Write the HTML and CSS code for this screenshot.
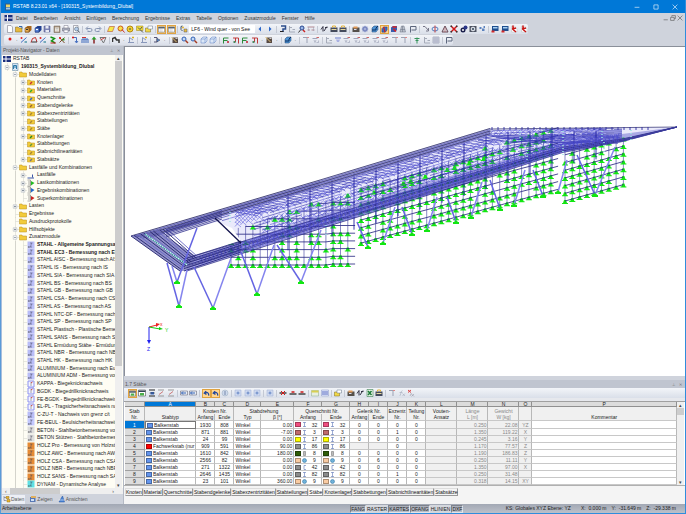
FILE: index.html
```html
<!DOCTYPE html>
<html lang="de">
<head>
    <meta charset="UTF-8">
    <meta name="viewport" content="width=device-width, initial-scale=1.0">
    <title>RSTAB 8.23.01 x64 - [190315_Systembildung_Dlubal]</title>
    <link rel="stylesheet" href="styles.css">
</head>
<body>
    <div class="app">
        <header class="titlebar">
            <svg class="icon" viewBox="0 0 16 16"><path d="M2 1h10v14H2z" fill="#2d5d8c"/><path d="M4 3h8v5H4z" fill="#e9d36a"/><path d="M4 9h8v4H4z" fill="#9fc7e8"/></svg>
            <h1>RSTAB 8.23.01 x64 - [190315_Systembildung_Dlubal]</h1>
            <div class="window-buttons">
                <button aria-label="Minimieren"><svg viewBox="0 0 10 10"><path d="M1 5.500h8"/></svg></button>
                <button aria-label="Maximieren"><svg viewBox="0 0 10 10"><path d="M1.500 1.500h7v7h-7z"/></svg></button>
                <button aria-label="Schließen"><svg viewBox="0 0 10 10"><path d="M1 1l8 8M9 1l-8 8"/></svg></button>
            </div>
        </header>

        <nav class="menubar">
            <svg class="flag" viewBox="0 0 16 12"><path d="M0 0h16v12H0z" fill="#1c2f7c"/><path d="M0 6h16M6 0v12" stroke="#fff" stroke-width="2"/></svg>
            <button>Datei</button>
            <button>Bearbeiten</button>
            <button>Ansicht</button>
            <button>Einfügen</button>
            <button>Berechnung</button>
            <button>Ergebnisse</button>
            <button>Extras</button>
            <button>Tabelle</button>
            <button>Optionen</button>
            <button>Zusatzmodule</button>
            <button>Fenster</button>
            <button>Hilfe</button>
            <div class="mdi-buttons">
                <button aria-label="Fenster minimieren"><svg viewBox="0 0 10 10"><path d="M1 8h7"/></svg></button>
                <button aria-label="Fenster wiederherstellen"><svg viewBox="0 0 10 10"><path d="M3 3V1h6v5H7M1 4h6v5H1z"/></svg></button>
                <button aria-label="Fenster schließen"><svg viewBox="0 0 10 10"><path d="M1 1l8 8M9 1l-8 8"/></svg></button>
            </div>
        </nav>

        <div class="toolbars">
            <div class="toolbar toolbar-main" id="mainToolbar"></div>
            <div class="toolbar toolbar-model" id="modelToolbar"></div>
        </div>

        <main class="workspace">
            <aside class="navigator">
                <div class="panel-title"><h2>Projekt-Navigator - Daten</h2><span class="pin">⊥</span><span class="pin">✕</span></div>
                <div class="tree-area">
                    <ul class="tree" id="tree"></ul>
                    <div class="scroll-v"><span>▴</span><div class="thumb"></div><span>▾</span></div>
                </div>
                <div class="scroll-h"><span>‹</span><div class="thumb"></div><span>›</span></div>
                <div class="nav-tabs">
                    <button class="active"><svg class="icon" viewBox="0 0 16 16"><path d="M2 2v9h5M2 5h5" stroke="#557" fill="none"/><path d="M6 3h6v4H6zM8 9h6v5H8z" fill="#e9b62e" stroke="#946c14"/></svg>Daten</button>
                    <button><svg class="icon" viewBox="0 0 16 16"><path d="M2 4h11v10H2z" fill="#5878b4"/><path d="M4 2h10v4H4z" fill="#e0b060"/><path d="M4 8h6v4H4z" fill="#cfe0f4"/></svg>Zeigen</button>
                    <button><svg class="icon" viewBox="0 0 16 16"><path d="M2 14L9 2l4 12z" fill="#4c86d8" stroke="#1d4e9e"/><path d="M1 10h12" stroke="#fff"/></svg>Ansichten</button>
                </div>
            </aside>

            <div class="content">
                <section class="view">
                    <svg class="model" id="model" viewBox="125 47 560 330" preserveAspectRatio="xMinYMin meet"></svg>
                </section>

                <section class="table-panel">
                    <div class="panel-title"><h2>1.7 Stäbe</h2><span class="pin">⊥</span><span class="pin">✕</span></div>
                    <div class="toolbar toolbar-table" id="tableToolbar"></div>
                    <div class="table-area">
                        <table class="members">
                            <colgroup>
                                <col class="c-no"><col class="c-type"><col class="c-node"><col class="c-node"><col class="c-rot"><col class="c-beta">
                                <col class="c-sec"><col class="c-sec"><col class="c-small"><col class="c-small"><col class="c-small"><col class="c-small">
                                <col class="c-num"><col class="c-num"><col class="c-num"><col class="c-pos"><col>
                            </colgroup>
                            <thead>
                                <tr class="letters">
                                    <th></th><th class="current">A</th><th>B</th><th>C</th><th>D</th><th>E</th><th>F</th><th>G</th><th>H</th><th>I</th><th>J</th><th>K</th><th>L</th><th>M</th><th>N</th><th>O</th><th>P</th>
                                </tr>
                                <tr class="groups">
                                    <th>Stab</th><th></th><th colspan="2">Knoten Nr.</th><th colspan="2">Stabdrehung</th><th colspan="2">Querschnitt Nr.</th><th colspan="2">Gelenk Nr.</th><th>Exzentr.</th><th>Teilung</th><th>Vouten-</th><th class="dim">Länge</th><th class="dim">Gewicht</th><th></th><th></th>
                                </tr>
                                <tr class="names">
                                    <th>Nr.</th><th>Stabtyp</th><th>Anfang</th><th>Ende</th><th>Typ</th><th>β [°]</th><th>Anfang</th><th>Ende</th><th>Anfang</th><th>Ende</th><th>Nr.</th><th>Nr.</th><th>Ansatz</th><th class="dim">L [m]</th><th class="dim">W [kg]</th><th></th><th>Kommentar</th>
                                </tr>
                            </thead>
                            <tbody id="memberRows"></tbody>
                        </table>
                        <div class="scroll-v"><span>▴</span><div class="thumb"></div><span>▾</span></div>
                    </div>
                    <div class="sheet-tabs">
                        <button>Knoten</button>
                        <button>Material</button>
                        <button>Querschnitte</button>
                        <button>Stabendgelenke</button>
                        <button>Stabexzentrizitäten</button>
                        <button>Stabteilungen</button>
                        <button class="active">Stäbe</button>
                        <button>Knotenlager</button>
                        <button>Stabbettungen</button>
                        <button>Stabnichtlinearitäten</button>
                        <button>Stabsätze</button>
                    </div>
                </section>
            </div>
        </main>

        <footer class="statusbar">
            <span class="message">Arbeitsebene</span>
            <div class="toggles">
                <button>FANG</button>
                <button class="on">RASTER</button>
                <button>KARTES</button>
                <button>OFANG</button>
                <button class="on">HLINIEN</button>
                <button>DXF</button>
            </div>
            <div class="coords">
                <span class="plane">KS: Globales XYZ Ebene: YZ</span>
                <span>X:&nbsp; 0.000 m</span>
                <span>Y:&nbsp; -31.649 m</span>
                <span>Z:&nbsp; -29.338 m</span>
            </div>
        </footer>
    </div>
    <script src="app.js"></script>
</body>
</html>
```
FILE: styles.css
```css
* {
    box-sizing: border-box;
}

body {
    margin: 0;
    font-family: "Liberation Sans", Arial, sans-serif;
    font-size: 5px;
    line-height: 7px;
    color: #222;
    background-color: #cfd3dc;
}

button, select {
    margin: 0;
    padding: 0;
    border: none;
    background: none;
    font: inherit;
    color: inherit;
    white-space: nowrap;
}

h1, h2 {
    margin: 0;
    font-size: 5px;
    font-weight: normal;
}

.app {
    display: flex;
    flex-direction: column;
    height: 100vh;
    border: 1px solid #2f8ddc;
    border-top: none;
    border-left-color: #5a9bd8;
}

.icon {
    display: block;
    width: 8px;
    height: 8px;
    flex: none;
}

/* title bar */
.titlebar {
    display: flex;
    align-items: center;
    flex: none;
    height: 13px;
    padding-left: 3px;
    gap: 1px;
    color: #fff;
    background-color: #0078d7;
}

.titlebar h1 {
    flex: 1;
}

.window-buttons {
    display: flex;
    gap: 13px;
    padding-right: 7px;
}

.window-buttons button, .mdi-buttons button {
    width: 6px;
    height: 6px;
}

.window-buttons svg, .mdi-buttons svg {
    display: block;
    fill: none;
    stroke: #fff;
}

/* menu */
.menubar {
    display: flex;
    align-items: center;
    flex: none;
    height: 10px;
    padding: 0 2px 0 3px;
    gap: 6px;
    color: #333;
    background-color: #cfd3dc;
}

.flag {
    width: 9px;
    height: 6px;
    margin-right: -3px;
}

.mdi-buttons {
    display: flex;
    gap: 1px;
    margin-left: auto;
}

.mdi-buttons svg {
    stroke: #555;
}

/* toolbars */
.toolbars {
    display: flex;
    flex-direction: column;
    gap: 1px;
    flex: none;
    padding: 1px 0 1px 3px;
}

.toolbar {
    display: flex;
    align-items: center;
    justify-content: space-between;
    height: 10px;
    border-radius: 2px;
    background: linear-gradient(#f3f5f9, #dadfe9);
}

.toolbar button {
    width: 9px;
    height: 9px;
}

.toolbar button .icon {
    margin: 0 auto;
}

.toolbar button.checked {
    border: 1px solid #e0a340;
    background-color: #ffd591;
}

.toolbar button.checked .icon {
    width: 7px;
    height: 7px;
}

.toolbar .more {
    width: 5px;
    color: #444;
    text-align: center;
}

.toolbar .sep {
    width: 1px;
    height: 7px;
    margin: 0 1px;
    background-color: #c4c9d4;
}

.toolbar select {
    width: 66px;
    height: 8px;
    padding: 0 2px;
    appearance: none;
    color: #111;
    background-color: #fff;
}

.toolbar-main {
    width: 77%;
    padding-left: 1px;
}

.toolbar-model {
    width: 66%;
    padding-left: 1px;
}

.toolbar-table {
    padding: 0 48% 0 4px;
    border-radius: 0;
}

/* workspace */
.workspace {
    display: flex;
    flex: 1;
    min-height: 0;
}

.panel-title {
    display: flex;
    align-items: center;
    flex: none;
    height: 8px;
    padding: 0 3px 0 1px;
    gap: 4px;
    color: #555;
    background-color: #c0c5d0;
}

.panel-title h2 {
    flex: 1;
}

.pin {
    font-size: 4px;
    color: #777;
}

.navigator {
    display: flex;
    flex-direction: column;
    flex: none;
    width: 123px;
    border-left: 1px solid #a9bfdc;
    border-right: 1px solid #b4b9c4;
}

.navigator .panel-title {
    height: 9px;
}

.tree-area {
    display: flex;
    flex: 1;
    min-height: 0;
    padding-right: 1px;
    background-color: #fefdf4;
}

.tree {
    display: flex;
    flex-direction: column;
    flex: 1;
    min-width: 0;
    margin: 0;
    padding: 0 0 0 1px;
    overflow: hidden;
    list-style: none;
}

.tree li {
    display: flex;
    align-items: center;
    flex: 1 1 0;
    min-height: 0;
    white-space: nowrap;
}

.tree .level {
    flex: none;
    align-self: stretch;
    width: 8px;
    background: linear-gradient(#d4d4cc, #d4d4cc) 4px 0 / 1px 100% no-repeat;
}

.tree .level.blank {
    background: none;
}

.tree .branch {
    flex: none;
    width: 8px;
    height: 8px;
}

.tree .label {
    padding-left: 2px;
}

.tree .bold {
    font-weight: bold;
}

.scroll-v {
    display: flex;
    flex-direction: column;
    flex: none;
    width: 7px;
    font-size: 5px;
    line-height: 6px;
    text-align: center;
    color: #444;
    background-color: #efefef;
}

.scroll-v .thumb {
    flex: none;
    height: 7px;
    background-color: #cdcdcd;
}

.tree-area .thumb {
    height: 305px;
}

.scroll-v span:last-child {
    margin-top: auto;
}

.scroll-h {
    display: flex;
    align-items: center;
    flex: none;
    height: 6px;
    padding: 0 9px 0 3px;
    gap: 3px;
    color: #444;
    background-color: #efefef;
}

.scroll-h .thumb {
    width: 50px;
    height: 6px;
    background-color: #cdcdcd;
}

.scroll-h span:last-child {
    margin-left: auto;
}

.nav-tabs {
    display: flex;
    align-items: center;
    flex: none;
    height: 10px;
    gap: 3px;
    color: #555;
}

.nav-tabs button {
    display: flex;
    align-items: center;
    height: 9px;
    padding: 0 1px;
}

.nav-tabs .active {
    background-color: #eceff5;
}

.content {
    display: flex;
    flex-direction: column;
    flex: 1;
    min-width: 0;
}

.view {
    flex: 1;
    min-height: 0;
    border-top: 1px solid #8a8f99;
    border-left: 1px solid #8a8f99;
    background-color: #fff;
    overflow: hidden;
}

.model {
    display: block;
    width: 100%;
}

/* member table */
.table-panel {
    display: flex;
    flex-direction: column;
    flex: none;
    margin-top: 4px;
    background-color: #e6e8ed;
}

.table-area {
    display: flex;
    margin-top: 3px;
    padding: 0 1px;
    border-top: 1px solid #a0a0a0;
    background-color: #fff;
}

.members {
    flex: 1;
    min-width: 0;
    table-layout: fixed;
    border-collapse: separate;
    border-spacing: 0;
    font-size: 5px;
    line-height: 6px;
}

.members .c-no { width: 20px; }
.members .c-type { width: 48px; }
.members .c-node { width: 19px; }
.members .c-rot { width: 27px; }
.members .c-beta { width: 33px; }
.members .c-sec { width: 28px; }
.members .c-small { width: 19px; }
.members .c-num { width: 31px; }
.members .c-pos { width: 13px; }

.members th, .members td {
    height: 7px;
    padding: 0 1px;
    overflow: hidden;
    border-right: 1px solid #b8b8b8;
    border-bottom: 1px solid #c8c8c8;
    font-weight: normal;
    text-align: center;
    white-space: nowrap;
}

.members th {
    padding: 0;
    background-color: #f0f0f0;
}

.members .letters th {
    height: 5px;
    line-height: 4px;
    border-color: #909090;
    background-color: #dcdcdc;
}

.members .letters .current, .members tbody .current {
    color: #fff;
    background-color: #0078d7;
}

.members .groups th {
    border-bottom: none;
}

.members tbody th {
    border-color: #a0a0a0;
    background-color: #dcdcdc;
}

.members .left {
    text-align: left;
}

.members .right {
    text-align: right;
}

.members .grey {
    background-color: #f0f0f0;
}

.members .dim {
    color: #888;
}

.members .focus {
    border: 1px solid #777;
}

.members .cell {
    display: flex;
    align-items: center;
    gap: 1px;
    height: 6px;
}

.members .cell .number {
    flex: 1;
    text-align: center;
}

.swatch {
    flex: none;
    width: 6px;
    height: 5px;
    border: 1px solid rgba(0, 0, 0, 0.3);
}

.profile {
    flex: none;
    width: 5px;
    height: 5px;
}

.sheet-tabs {
    display: flex;
    align-items: center;
    height: 19px;
    padding: 0 0 6px 1px;
    border-top: 1px solid #b0b0b0;
    background-color: #f4f4f4;
}

.sheet-tabs button {
    height: 8px;
    border: 1px solid #999;
    border-top-color: #ddd;
    border-left-color: #ddd;
    color: #111;
}

.sheet-tabs .active {
    border-top-color: #f4f4f4;
    background-color: #fff;
}

/* status bar */
.statusbar {
    display: flex;
    align-items: center;
    flex: none;
    height: 9px;
    padding-left: 1px;
    color: #222;
    background: linear-gradient(#a2a8b4, #bcc0c9);
}

.message {
    width: 51%;
}

.toggles {
    display: flex;
    flex: none;
}

.toggles button {
    height: 8px;
    border: 1px solid #7d828c;
    border-right-color: #e3e5ea;
    border-bottom-color: #e3e5ea;
}

.toggles .on {
    border-color: #d4d7dd;
    background-color: #d4d7dd;
}

.coords {
    display: flex;
    justify-content: flex-end;
    flex: 1;
    gap: 5px;
    padding-right: 9px;
    white-space: nowrap;
}

.plane {
    padding-right: 5px;
}
```
FILE: app.js
```js
// toolbar icons, 16x16
const ICONS = {
    page: '<path d="M3 1h7l3 3v11H3z" fill="#fff" stroke="#667"/>',
    open: '<path d="M1 4h5l2 2h6v8H1z" fill="#e8b93c" stroke="#7c6524"/><path d="M8 3h6v4" stroke="#36a" fill="none" stroke-width="2"/>',
    box: '<path d="M2 6l5-4h8v8l-5 5H2z" fill="#a8661c"/><path d="M2 6h8v8H2z" fill="#e9ae50" stroke="#5d3a12"/><path d="M4 9h4" stroke="#333" stroke-width="2"/>',
    boxBlue: '<path d="M2 6l5-4h8v8l-5 5H2z" fill="#1f3f91"/><path d="M2 6h8v8H2z" fill="#5581d8" stroke="#182f6c"/><path d="M4 9h4" stroke="#fff" stroke-width="2"/>',
    save: '<path d="M2 2h12v12H2z" fill="#7b83b5" stroke="#4a4f80"/><path d="M5 2h6v5H5zM5 10h7v4H5z" fill="#e8eaf4"/>',
    clip: '<path d="M2 2h12v13H2z" fill="#a89684" stroke="#6d5c4c"/><path d="M4 5h8v8H4z" fill="#f4efe6"/><path d="M5 7h6M5 10h6" stroke="#999"/>',
    print: '<path d="M4 1h8v6H4z" fill="#fff" stroke="#778"/><path d="M1 6h14v6H1z" fill="#a9afbd" stroke="#667"/><path d="M4 10h8v5H4z" fill="#fff" stroke="#778"/>',
    preview: '<path d="M3 1h9v14H3z" fill="#fff" stroke="#667"/><circle cx="9" cy="8" r="4" fill="#b5cdea" stroke="#456"/><path d="M12 11l3 4" stroke="#456" stroke-width="2"/>',
    undo: '<path d="M3 7h8a3 3 0 0 1 0 6H5M6 3L2 7l4 4" fill="none" stroke="#8795b2" stroke-width="2"/>',
    redo: '<path d="M13 7H5a3 3 0 0 0 0 6h6M10 3l4 4-4 4" fill="none" stroke="#8795b2" stroke-width="2"/>',
    plane: '<path d="M5 3h10l-4 10H1z" fill="#f6e94a" stroke="#a32"/>',
    target: '<circle cx="7" cy="7" r="5" fill="#f7e04a" stroke="#c85a1e" stroke-width="2"/><path d="M10 9l5 6" stroke="#c33" stroke-width="2"/>',
    gold: '<circle cx="8" cy="8" r="6" fill="#f2d234" stroke="#b58a12" stroke-width="2"/><circle cx="8" cy="8" r="2" fill="#775"/>',
    yellow: '<path d="M1 2h13v9H1z" fill="#f3e03c" stroke="#987f1a"/><path d="M4 5l4 4 4-5M9 10l5 5" stroke="#555" stroke-width="2" fill="none"/>',
    folder: '<path d="M1 6h10v8H1z" fill="#f1d848" stroke="#7b6a20"/><path d="M6 2h9v6H6z" fill="#fff" stroke="#678"/>',
    cols: '<path d="M1 2h14v12H1z" fill="#fff" stroke="#456"/><path d="M1 4h14" stroke="#456" stroke-width="3"/><path d="M5 4v10M9 4v10" stroke="#99a"/>',
    loads: '<path d="M2 3v6l3 3M2 3l3-1" stroke="#456" stroke-width="2" fill="none"/><circle cx="6" cy="5" r="2" fill="#e5b22e"/><path d="M8 8h6v6H8z" fill="#e9be3f" stroke="#556"/>',
    prev: '<path d="M10 3L5 8l5 5z" fill="#2b67c9"/>',
    next: '<path d="M6 3l5 5-5 5z" fill="#2b67c9"/>',
    query: '<path d="M4 2h9v6H8v6" fill="none" stroke="#2d4d8c" stroke-width="3"/><path d="M2 13h7" stroke="#222" stroke-width="2"/>',
    axisGrey: '<path d="M3 2v12h11M3 5h5M9 9h5" stroke="#a5abb8" stroke-width="2" fill="none"/>',
    lens: '<circle cx="8" cy="6" r="4" fill="#9cb8e8" stroke="#27468e" stroke-width="2"/><path d="M5 10l-4 5" stroke="#333" stroke-width="2"/><path d="M10 10l4 4" stroke="#c22" stroke-width="3"/>',
    xx: '<path d="M1 4h14M1 10h5M9 10h6" stroke="#b48a92" stroke-width="2"/><path d="M3 4v8M13 4v8" stroke="#99a"/>',
    calc: '<path d="M2 9l4-6v10M8 12l6-9M10 5h5" stroke="#334" stroke-width="2" fill="none"/>',
    case: '<path d="M1 5h14v9H1z" fill="#434a5c"/><path d="M5 5V2h6v3" fill="none" stroke="#e4b43b" stroke-width="2"/><path d="M3 9h10" stroke="#e7d9a0" stroke-width="2"/>',
    render: '<path d="M1 5h14v9H1z" fill="#55504a"/><path d="M3 3h8v4H3z" fill="#e39a57"/><path d="M4 9h5" stroke="#dde" stroke-width="2"/>',
    gear: '<circle cx="8" cy="8" r="4" fill="none" stroke="#6c7bb8" stroke-width="3"/><path d="M8 1v14M1 8h14M3 3l10 10M13 3L3 13" stroke="#8d99cc"/>',
    cube: '<path d="M2 6l4-4h8v7l-4 5H2z" fill="#4f94d4" stroke="#1d4677"/><path d="M2 10h8V6l4-4" stroke="#0c2f60" fill="none" stroke-width="2"/>',
    cubeHot: '<path d="M2 6l4-4h8v7l-4 5H2z" fill="#396fc6" stroke="#1d2f67"/><path d="M6 2l3 12" stroke="#c22" stroke-width="3"/>',
    cubeRed: '<path d="M2 5l4-3h8v8l-4 4H2z" fill="#385daf"/><path d="M5 4h8M7 8l5 5" stroke="#d22" stroke-width="3"/>',
    cone: '<path d="M5 2h5l3 12H2z" fill="#b9bfca" stroke="#697080"/><path d="M7 2v12M3 9h9" stroke="#697080"/>',
    flag: '<path d="M3 15V3h11v7H5" fill="#e8ebf2" stroke="#5c667c" stroke-width="2"/>',
    arc: '<path d="M2 3h4l7 8M13 6v6H8" fill="none" stroke="#778" stroke-width="2"/>',
    rotate: '<ellipse cx="8" cy="8" rx="6" ry="4" fill="none" stroke="#557ec0" stroke-width="2"/><path d="M8 1v14" stroke="#c44" stroke-width="2"/>',
    tri: '<path d="M8 2l6 12H2z" fill="#d7dae2" stroke="#6b4854" stroke-width="2"/><path d="M8 6v8" stroke="#c55"/>',
    cross: '<path d="M2 2l12 12M14 2L2 14" stroke="#d01818" stroke-width="3"/><path d="M1 1h3v3H1zM12 1h3v3h-3zM1 12h3v3H1zM12 12h3v3h-3z" fill="#333"/>',
    ball: '<circle cx="6" cy="10" r="5" fill="#1b1f4b"/><circle cx="11" cy="5" r="4" fill="#2a3587"/><circle cx="6" cy="10" r="2" fill="#fff"/>',
    camera: '<path d="M1 2h14v12H1z" fill="#4d5362"/><circle cx="8" cy="8" r="4" fill="#dbe2ef" stroke="#fff"/><circle cx="8" cy="8" r="2" fill="#345"/>',
    dots: '<path d="M3 4h4v4H3zM8 7h5v5H8zM11 2h3v4h-3z" fill="#5c82bd"/>',
    win: '<path d="M2 2h13v10H2z" fill="#1f4e8e"/><path d="M4 4h9v3H4z" fill="#a9d0f2"/><path d="M1 11h6v4H1z" fill="#d12b2b"/>',
    pdf: '<path d="M3 2h6l5 6v6H3z" fill="#fff" stroke="#bbb"/><path d="M6 1v8l6 5M4 8l8-2" stroke="#c81414" stroke-width="3" fill="none"/>',
    node: '<circle cx="8" cy="6" r="3" fill="#dc1a1a"/>',
    member: '<path d="M2 13L13 3" stroke="#456fc4" stroke-width="2"/><circle cx="3" cy="4" r="2" fill="#d22"/><path d="M9 10h5v4H9z" fill="#7ab"/>',
    frame: '<path d="M2 13l3-8 6-2 3 9" fill="none" stroke="#c03030" stroke-width="2"/><path d="M3 12h11" stroke="#333" stroke-width="2"/>',
    support: '<path d="M3 2l8 3-6 5 7 4" fill="none" stroke="#149114" stroke-width="3"/><path d="M3 14h11" stroke="#b22" stroke-width="2"/>',
    xmark: '<path d="M3 3l10 11M13 3L3 13" stroke="#7d4b2b" stroke-width="2"/><path d="M9 5h4v4H9z" fill="#2a9c2a"/><circle cx="4" cy="4" r="2" fill="#d11"/>',
    hook: '<path d="M3 3h8v10M8 10l3 4 3-4" fill="none" stroke="#466fc0" stroke-width="2"/><circle cx="4" cy="3" r="2" fill="#d11"/>',
    grid: '<path d="M2 14V6h12v8M6 6v8M10 6v8" fill="none" stroke="#3d68bb" stroke-width="2"/><path d="M2 3h8" stroke="#c33" stroke-width="2"/>',
    tree: '<path d="M8 15V6" stroke="#822" stroke-width="3"/><path d="M3 7l5-6 5 6z" fill="#2aa02a"/>',
    wedge: '<path d="M2 3h12l-5 11z" fill="none" stroke="#777" stroke-width="2"/><path d="M3 8l9-5" stroke="#c44" stroke-width="2"/>',
    bend: '<path d="M1 12V5l5-2 3 5h5v6" fill="none" stroke="#333" stroke-width="3"/>',
    axes: '<path d="M2 13h12M5 13V3l7 5" fill="none" stroke="#8998bb" stroke-width="2"/><path d="M10 3h4" stroke="#d9b020" stroke-width="3"/>',
    arrowBox: '<path d="M2 3h6v9H2" fill="none" stroke="#557" stroke-width="2"/><path d="M8 5l6 3-6 4z" fill="#5b8fd4" stroke="#334"/>',
    film: '<path d="M3 3h11v11H3z" fill="#584a44"/><path d="M1 2l10 10" stroke="#e0c070" stroke-width="2"/><path d="M9 5h4" stroke="#ccc" stroke-width="2"/>',
    zoom: '<circle cx="6" cy="6" r="4" fill="#c4daf6" stroke="#3160b4" stroke-width="2"/><path d="M9 9l5 5" stroke="#a33a22" stroke-width="3"/>',
    wire: '<path d="M2 6l4-4h8v8l-4 4H2zM2 6h8v8M10 6l4-4" fill="#dce8f8" stroke="#5b7fc0"/>',
    viewX: '<path d="M3 15V4h10M3 9h8" fill="none" stroke="#2d8c3c" stroke-width="2"/><path d="M10 10h4v4h-4z" fill="#c85060"/>',
    viewY: '<path d="M2 4h11v11M7 4v8" fill="none" stroke="#c03a3a" stroke-width="2"/><path d="M3 10h4v4H3z" fill="#4b8a60"/>',
    result: '<path d="M2 3h8v11" fill="none" stroke="#9aa1b3" stroke-width="2"/><path d="M10 3h4" stroke="#d88" stroke-width="2"/>',
    force: '<path d="M1 5h10" stroke="#9ea4bb" stroke-width="2"/><path d="M9 3h5" stroke="#c66" stroke-width="2"/><path d="M4 8l2 5 2-5M9 13h4V9" fill="none" stroke="#888fa6"/>',
    diag: '<path d="M2 4h12" stroke="#6b7ed0" stroke-width="2"/><path d="M4 7h8l-2 5H6z" fill="#a9b1e2"/>',
    plant: '<path d="M8 15V3M3 5h10M5 9h6" stroke="#35935a" stroke-width="2"/>',
    sheet: '<path d="M2 2h12v12H2zM2 6h12M2 10h12M6 2v12M10 2v12" fill="#eef" stroke="#777d90"/>',
    tabGreen: '<path d="M1 2h14v12H1z" fill="#fff" stroke="#333"/><path d="M1 3h14v3H1z" fill="#345"/><path d="M4 8h8v5H4z" fill="#4bb04b"/>',
    tabBlue: '<path d="M2 2h12M2 14h12" stroke="#222" stroke-width="2"/><path d="M5 6h7v5H5z" fill="#3d6bc1"/><path d="M3 8h11" stroke="#222"/>',
    tabRed: '<path d="M2 2h12M2 14h12" stroke="#999" stroke-width="2"/><path d="M4 11l8-6" stroke="#c77" stroke-width="2"/>',
    tabMove: '<path d="M1 4h14v8H1z" fill="#e8edf6" stroke="#556"/><path d="M3 8h9M6 5L3 8l3 3" stroke="#3764b4" stroke-width="2" fill="none"/>',
    back: '<path d="M13 13c1-7-4-9-9-6M7 3L3 7l5 3" fill="none" stroke="#24489c" stroke-width="3"/>',
    info: '<circle cx="8" cy="8" r="6" fill="#cdd9ec" stroke="#9ab"/><path d="M8 4v8" stroke="#78a" stroke-width="2"/>',
    soft: '<path d="M2 2h12v12H2z" fill="#cfdaf0" stroke="#9cafd4"/><path d="M5 8h6M8 5v6" stroke="#6485c4" stroke-width="2"/>',
    del: '<path d="M1 8h14" stroke="#444" stroke-width="3"/><path d="M4 4l8 8M12 4l-8 8" stroke="#d01818" stroke-width="2"/>',
    minus: '<path d="M1 10h14" stroke="#444" stroke-width="3"/><path d="M5 6h6" stroke="#d01818" stroke-width="3"/>',
    tabYellow: '<path d="M1 3h14v11H1z" fill="#e8efe0" stroke="#8a8"/><path d="M1 3h14v4H1z" fill="#d9cf50"/>',
    rows: '<path d="M1 2h14v12H1z" fill="#e3e9fb" stroke="#8794c4"/><path d="M2 6h12M2 10h12" stroke="#5a6cc0" stroke-width="2"/>',
    excel: '<path d="M2 1h12v14H2z" fill="#e9f4e9" stroke="#1d6f35"/><path d="M4 4l7 8M11 4l-7 8" stroke="#1d7a38" stroke-width="3"/>',
    fx: '<path d="M3 14c3 0 2-11 6-11M3 7h6M9 9l5 5M14 9l-5 5" fill="none" stroke="#99a1b2"/>',
    fxRed: '<path d="M2 2l6 5M8 2L2 7" stroke="#d44" stroke-width="2"/><path d="M6 14l3-6M9 10l5 5M14 10l-5 5" fill="none" stroke="#889"/>'
};

// "|" separator, ">" drop-down arrow, "*" checked button, "select" load case list
const TOOLBARS = {
    mainToolbar: 'page open box boxBlue save clip print preview | undo redo | plane target gold yellow folder | *cols *cols | loads select prev next | query axisGrey lens xx | calc case case | render gear cube *cubeHot cubeRed cone flag | arc rotate tri cross ball camera dots | win win pdf pdf',
    modelToolbar: 'node > member frame member support xmark | hook grid tree wedge | bend > axes | axes | arrowBox > | film zoom zoom wire wire | viewX viewY viewX viewY > film > | cube > | result force | axisGrey diag force force force force force result result | plant axisGrey sheet | flag',
    tableToolbar: '*tabGreen tabGreen tabBlue tabRed tabRed | tabMove tabMove | *back *back info | soft soft soft | soft | del minus minus | tabYellow rows | folder | render calc excel case | result fx fxRed'
};

function icon(name) {
    return `<svg class="icon" viewBox="0 0 16 16">${ICONS[name]}</svg>`;
}

for (const id in TOOLBARS) {
    document.getElementById(id).innerHTML = TOOLBARS[id].split(' ').map(item => {
        if (item === '|') return '<span class="sep"></span>';
        if (item === '>') return '<span class="more">·</span>';
        if (item === 'select') return '<select aria-label="Lastfall"><option>LF6 - Wind quer - von See</option></select>';
        const name = item.replace('*', '');
        return `<button aria-label="${name}"${item[0] === '*' ? ' class="checked"' : ''}>${icon(name)}</button>`;
    }).join('');
}

// ---- project tree: level | expander | icon | label
const TREE = [
    '0||rstab|RSTAB', '0|-|file|!190315_Systembildung_Dlubal', '1|-|dir|Modelldaten',
    '2|+|d:#c33|Knoten', '2|+|d:#3a3|Materialien', '2|+|d:#36c|Querschnitte', '2|+|d:#963|Stabendgelenke',
    '2|+|d:#a83|Stabexzentrizitäten', '2||d:#a83|Stabteilungen', '2|+|d:#a83|Stäbe', '2|+|d:#282|Knotenlager',
    '2||d:#693|Stabbettungen', '2||d:#a83|Stabnichtlinearitäten', '2|+|d:#777|Stabsätze',
    '1|-|dir|Lastfälle und Kombinationen', '2|+|lc|Lastfälle', '2|+|k:#2b2|Lastkombinationen',
    '2|+|k:#26c|Ergebniskombinationen', '2||k:#c22|Superkombinationen',
    '1|+|dir|Lasten', '1||dir|Ergebnisse', '1||dir|Ausdruckprotokolle', '1|+|dir|Hilfsobjekte', '1|-|dir|Zusatzmodule',
    '2||m:#b9bdf8|!STAHL - Allgemeine Spannungsanalyse', '2||m:#b9bdf8|!STAHL EC3 - Bemessung nach Eurocode',
    '2||m:#b9bdf8|STAHL AISC - Bemessung nach AISC', '2||m:#b9bdf8|STAHL IS - Bemessung nach IS',
    '2||m:#b9bdf8|STAHL SIA - Bemessung nach SIA', '2||m:#b9bdf8|STAHL BS - Bemessung nach BS',
    '2||m:#b9bdf8|STAHL GB - Bemessung nach GB', '2||m:#b9bdf8|STAHL CSA - Bemessung nach CSA',
    '2||m:#b9bdf8|STAHL AS - Bemessung nach AS', '2||m:#b9bdf8|STAHL NTC-DF - Bemessung nach NTC-DF',
    '2||m:#b9bdf8|STAHL SP - Bemessung nach SP', '2||m:#b9bdf8|STAHL Plastisch - Plastische Bemessung',
    '2||m:#b9bdf8|STAHL SANS - Bemessung nach SANS', '2||m:#b9bdf8|STAHL Ermüdung Stäbe - Ermüdungsnachweis',
    '2||m:#b9bdf8|STAHL NBR - Bemessung nach NBR', '2||m:#b9bdf8|STAHL HK - Bemessung nach HK',
    '2||m:#b9bdf8|ALUMINIUM - Bemessung nach Eurocode', '2||m:#b9bdf8|ALUMINIUM ADM - Bemessung von Aluminium',
    '2||n:#8d92f0|KAPPA - Biegeknicknachweis', '2||n:#8d92f0|BGDK - Biegedrillknicknachweis',
    '2||n:#8d92f0|FE-BGDK - Biegedrillknicknachweis', '2||n:#8d92f0|EL-PL - Tragsicherheitsnachweis nach',
    '2||m:#b9bdf8|C-ZU-T - Nachweis von grenz c/t', '2||m:#c3c8ff|FE-BEUL - Beulsicherheitsnachweis',
    '2||m:#dcdcdc|BETON - Stahlbetonbemessung von', '2||m:#dcdcdc|BETON Stützen - Stahlbetonbemessung',
    '2||m:#e58a35|HOLZ Pro - Bemessung von Holzstäben', '2||m:#e58a35|HOLZ AWC - Bemessung nach AWC',
    '2||m:#e58a35|HOLZ CSA - Bemessung nach CSA', '2||m:#e58a35|HOLZ NBR - Bemessung nach NBR',
    '2||m:#e58a35|HOLZ SANS - Bemessung nach SANS', '2||m:#5fe0e4|DYNAM - Dynamische Analyse'
];

function treeIcon(type) {
    const [kind, color] = type.split(':');
    const folder = '<path d="M1 4h5l1 2h8v8H1z" fill="#f2cb3a" stroke="#b98d1c"/>';
    const shapes = {
        rstab: '<path d="M0 2h16v12H0z" fill="#1c2f7c"/><path d="M0 8h16M6 2v12" stroke="#fff" stroke-width="2"/>',
        file: '<path d="M3 1h11v14H3z" fill="#d6e6f5" stroke="#4a7698"/><path d="M5 12V5h6v7M5 8h6" stroke="#2f7ca8" stroke-width="2" fill="none"/>',
        dir: folder,
        d: folder + `<path d="M6 12l4-4" stroke="${color}" stroke-width="3"/>`,
        lc: '<path d="M1 14h13M11 7v6" stroke="#3a56a8" stroke-width="2"/>',
        k: `<path d="M1 2h6v12H1M2 6h5M2 10h5" fill="none" stroke="#555"/><path d="M8 4l7 4-7 5z" fill="${color}"/>`,
        m: `<path d="M1 1h14v14H1z" fill="${color}"/><path d="M6 4h5M5 12h5M9 4l-2 8" stroke="#4a4a5e" fill="none"/><path d="M2 11h3v2H2z" fill="#555"/>`,
        n: `<path d="M2 2h12v12H2z" fill="#f4f4ff" stroke="${color}" stroke-width="2"/><path d="M8 4v8" stroke="#555"/><path d="M8 6l3-2" stroke="#c44" stroke-width="2"/>`
    };
    return `<svg class="icon" viewBox="0 0 16 16">${shapes[kind]}</svg>`;
}

function branch(sign) {
    const box = '<path d="M4.500 5.500h7v7h-7z" fill="#fff" stroke="#a5aab4"/><path d="M6 9h4" stroke="#456"/>';
    const plus = sign === '+' ? '<path d="M8 7v4" stroke="#456"/>' : '';
    return `<svg class="branch" viewBox="0 0 16 16"><path d="M9 0v16M9 9h7" stroke="#d0d0c8"/>${sign ? box + plus : ''}</svg>`;
}

document.getElementById('tree').innerHTML = TREE.map((row, i) => {
    const [level, sign, type, text] = row.split('|');
    const bold = text[0] === '!';
    const lead = '<span class="level blank"></span>'.repeat(level > 0 ? 1 : 0) + (level > 1 ? '<span class="level"></span>' : '');
    return `<li>${lead}${i ? branch(sign) : ''}${treeIcon(type)}<span class="label${bold ? ' bold' : ''}">${text.replace('!', '')}</span></li>`;
}).join('');

// ---- member table
const MEMBERS = [
    ['Balkenstab', 1930, 808, '0.00', '#f04f80', 'I', 32, 0, 0, 0, 0, '0.250', '22.08', 'YZ'],
    ['Balkenstab', 871, 881, '-7.00', '#c06a6c', 'I', 3, 0, 0, 1, 0, '1.350', '119.22', 'X'],
    ['Balkenstab', 24, 99, '0.00', '#ffff00', 'I', 17, 0, 0, 0, 0, '0.245', '3.16', 'Y'],
    ['Fachwerkstab (nur', 909, 591, '90.00', '#8c8c8c', 'I', 86, '', '', 0, '', '1.170', '77.57', 'Z'],
    ['Balkenstab', 1610, 842, '180.00', '#2f5c08', 'R', 8, 0, 0, 0, 0, '1.190', '186.83', 'Z'],
    ['Balkenstab', 2566, 82, '0.00', '#f9cba2', 'O', 9, 0, 6, 0, 0, '0.250', '11.11', 'Y'],
    ['Balkenstab', 271, 1322, '0.00', '#8c8c8c', 'C', 42, 0, 0, 0, 0, '1.350', '97.00', 'X'],
    ['Balkenstab', 2646, 1435, '0.00', '#8c8c8c', 'I', 82, 0, 0, 1, 0, '0.250', '31.48', ''],
    ['Balkenstab', 23, 101, '360.00', '#f9cba2', 'O', 9, 0, 0, 0, 0, '0.318', '14.15', 'XY']
];

const PROFILES = {
    I: '<path d="M2 1h6M2 9h6M5 1v8" stroke="#3c5aa6"/>',
    C: '<path d="M8 1H4v8h4" stroke="#3c5aa6" fill="none"/>',
    R: '<path d="M3 1h4v8H3z" fill="#bbb" stroke="#666"/>',
    O: '<circle cx="5" cy="5" r="4" fill="#6fb1d8" stroke="#2a6c9c"/>'
};

function swatch(color) {
    return `<span class="swatch" style="background-color: ${color}"></span>`;
}

document.getElementById('memberRows').innerHTML = MEMBERS.map((m, i) => {
    const [type, from, to, beta, color, profile, sec, h1, h2, ecc, div, len, weight, pos] = m;
    const section = `<td><div class="cell">${swatch(color)}<svg class="profile" viewBox="0 0 10 10">${PROFILES[profile]}</svg><span class="number">${sec}</span></div></td>`;
    const opt = v => `<td${v === '' ? ' class="grey"' : ''}>${v}</td>`;
    return `<tr><th${i === 0 ? ' class="current"' : ''}>${i + 1}</th>
        <td class="left${i === 0 ? ' focus' : ''}"><div class="cell">${swatch(i === 3 ? '#ff0000' : '#6495ed')}${type}</div></td>
        <td>${from}</td><td>${to}</td><td class="left"><u>W</u>inkel</td><td class="right">${beta}</td>${section}${section}
        ${opt(h1)}${opt(h2)}${opt(ecc)}${opt(div)}<td class="grey"></td>
        <td class="grey dim right">${len}</td><td class="grey dim right">${weight}</td><td class="grey dim">${pos}</td><td></td></tr>`;
}).join('');

// ---- 3D model of the hall
let seed = 7;
function rnd() {
    seed = (seed * 16807) % 2147483647;
    return seed / 2147483647;
}

// y on a polyline for a given x
function along(points, x) {
    for (let i = 1; i < points.length; i++) {
        const [x0, y0] = points[i - 1], [x1, y1] = points[i];
        if (x <= x1) return y0 + (y1 - y0) * (x - x0) / (x1 - x0);
    }
    return points[points.length - 1][1];
}

const TOP = [[131, 236], [320, 181], [490, 129], [677, 127]];
const EAVE = [[187, 268], [340, 220], [490, 174], [563, 151], [622, 141], [677, 127]];
const out = [];

function line(x1, y1, x2, y2, color, width, opacity) {
    out.push(`<line x1="${x1.toFixed(1)}" y1="${y1.toFixed(1)}" x2="${x2.toFixed(1)}" y2="${y2.toFixed(1)}" stroke="${color}" stroke-width="${width}" opacity="${opacity || 1}"/>`);
}

function support(x, y) {
    out.push(`<path d="M${(x - 1).toFixed(1)} ${(y - 3).toFixed(1)}h2l1 3h1v1h-6v-1h1z" fill="#12e612"/>`);
}

// wall columns with girts and supports
function wall(x0, x1, top, bottom, step, density) {
    for (let x = x0; x <= x1; x += 7.3) {
        line(x, top(x), x, bottom(x), '#3b3b9c', 0.6);
        const full = rnd();
        for (let y = bottom(x); y > top(x); y -= step) {
            if (y === bottom(x) || rnd() * 0.6 + full * 0.4 < density) support(x, y);
        }
    }
    for (let k = 0; k < 9; k++) {
        for (let x = x0; x < x1 - 1; x += 7.3) {
            const a = bottom(x) - k * step - 2, b = bottom(x + 7.3) - k * step - 2;
            if (a > top(x)) line(x, a, x + 7.3, b, '#20207c', 0.8);
        }
    }
}

// roof plane
out.push('<path d="M131 236L320 181L490 129L677 127L622 141L563 151L490 174L340 220L187 268Z" fill="#5c5ce0" opacity="0.13"/>');

const ground = x => 249 - (x - 354) * 0.273;
wall(231, 354, x => along(EAVE, x) - 24, x => (x < 330 ? 267 : 266), 7.7, 0.5);
wall(361, 556, x => along(EAVE, x) - 26, x => ground(x) - 2, 7.7, 0.75);
wall(565, 624, x => along(EAVE, x) - 1, x => 203 - (x - 565) * 0.28, 7.7, 0.8);

// supports seen through the roof trusses
for (let x = 345; x < 560; x += 7.3) {
    for (let k = 0; k < 3; k++) {
        const y = along(EAVE, x) - 16 - k * 8;
        if (y > along(TOP, x) + 22 && rnd() > 0.45) support(x, y);
    }
}

// purlins
for (let t = 0.04; t < 1; t += 0.065) {
    for (let x = 222; x < 620; x += 8) {
        const y = s => along(TOP, s) + (along(EAVE, s) - along(TOP, s)) * t;
        if (x < 250 && t > 0.3) continue;
        if (rnd() > 0.15) line(x, y(x), x + 8, y(x + 8), rnd() > 0.5 ? '#2a2aa8' : '#5656d8', 0.7, 0.85);
    }
}

// rafters and bracing
for (let x = 235; x < 600; x += 5.5) {
    const top = along(TOP, x), h = along(EAVE, x) - top;
    for (let k = 0; k < 5; k++) {
        const y = top + h * (0.05 + k * 0.2) * (x < 260 ? 0.4 : 1);
        line(x, y, x + 6, y + h * 0.11, '#4646d8', 0.6, 0.8);
        line(x, y + h * 0.1, x + 5, y - 1, '#4646d8', 0.6, 0.8);
    }
    line(x, top + 6, x + 22, top + 10, '#3434b4', 0.7, 0.8);
}
for (let x = 288; x < 600; x += 22) {
    line(x, along(TOP, x) + 3, x, along(EAVE, x) + 14, '#2222a0', 0.9);
}
for (let x = 500; x < 600; x += 9) {
    line(x - 22, 133 + rnd() * 14, x + 28, 138 + rnd() * 6, '#3636b8', 0.6);
}

// roof edge towards the back
out.push('<path d="M131 236L320 180L490 128L492 134L320 188L200 222L150 238Z" fill="#7474a8" opacity="0.45"/>');
for (let k = 0; k < 6; k++) {
    line(131 + k * 3, 236 + k * 0.5, 320, 180 + k * 1.3, k % 2 ? '#5d5dbd' : '#3a3a72', 0.9);
    line(320, 180 + k * 1.3, 490, 128.5 + k * 1.3, k % 2 ? '#6f6fc8' : '#45457c', 0.9);
}
line(490, 129, 677, 127, '#26266a', 0.7);
for (let x = 492; x < 650; x += 6) {
    line(x, 127, x, 130, '#2e2ea0', 0.9);
}

// front eave band, tapering to the tip on the right
out.push('<path d="M187 271L340 223L490 176L563 153L622 142L677 127L622 134L563 143L490 164L340 209L197 256Z" fill="#4a4ac4" opacity="0.4"/>');
for (let k = 0; k < 9; k++) {
    const pts = EAVE.map(([x, y], i) => `${x},${(y + (3 - k * 1.6) * (1 - i * 0.2)).toFixed(1)}`).join(' ');
    out.push(`<polyline points="${pts}" fill="none" stroke="${k % 3 === 1 ? '#6868dc' : '#26267c'}" stroke-width="0.8" opacity="0.85"/>`);
}
for (let x = 200; x < 620; x += 4) {
    const y = along(EAVE, x);
    line(x, y - 8, x + 3, y, '#4c4cd0', 0.9, 0.75);
    line(x, y, x + 3, y - 9, '#4c4cd0', 0.7, 0.75);
}

// gable and opening
out.push('<path d="M167 237L197 227L217 222L232 228L241 241L194 255Z" fill="#fff"/>');
out.push('<path d="M131 236L160 229L167 237L197 257L187 271L180 271Z" fill="#6a6ab4" opacity="0.7"/>');
for (let k = 0; k < 12; k++) {
    line(131 + k * 3.2, 236 - k * 0.7, 180 + k * 1.6, 271 - k * 1.3, k % 3 === 2 ? '#6666c4' : '#24246e', 0.9);
}
for (let k = 0; k < 6; k++) {
    line(166, 237 - k * 1.5, 222, 219 - k * 1.6, '#35358c', 0.8);
    line(184, 271 - k * 2.4, 241, 252 - k * 2.2, '#2c2c80', 0.9);
}
line(145, 234, 187, 265, '#dff', 1.5);
out.push('<path d="M145 234L187 265" stroke="#1c8c8c" stroke-width="1.3" stroke-dasharray="1 1"/>');
line(215, 218, 241, 243, '#12124c', 1.3);

// raking columns: top x, top y, foot x, foot y
[
    [167, 263, 179, 306], [187, 270, 179, 306], [197, 228, 177, 282], [172, 266, 177, 282],
    [194, 267, 213, 308], [231, 258, 213, 308], [241, 252, 257, 294], [274, 245, 257, 294],
    [277, 245, 301, 282], [321, 230, 301, 282], [357, 222, 368, 247], [395, 207, 383, 243],
    [402, 207, 412, 234], [437, 197, 427, 230], [447, 197, 456, 222], [482, 182, 471, 217],
    [490, 180, 500, 209], [525, 170, 514, 205], [533, 170, 543, 196], [567, 160, 558, 192],
    [577, 155, 595, 195], [615, 147, 595, 195]
].forEach(([x1, y1, x2, y2], i) => {
    line(x1, y1, x2, y2, i % 2 ? '#8484ee' : '#6464e2', 1.5);
    out.push(`<path d="M${x2} ${y2 - 2}l2 2h1v2h-6v-2h1z" fill="#12e612"/>`);
});

// hinges
[[520, 131], [527, 150], [563, 131], [563, 145], [602, 131], [604, 142], [631, 130], [230, 212], [290, 212], [326, 225]].forEach(([x, y]) => {
    out.push(`<path d="M${x} ${y}v12" stroke="#9fe8e4" stroke-width="1.5" stroke-dasharray="1 2"/>`);
});

// axis cross
out.push(`<path d="M149 327l8-2" stroke="#e22" /><path d="M156 323l4 1-4 3z" fill="#e22"/>
    <path d="M149 327l11 2" stroke="#1c1"/><path d="M159 327l4 2-4 1z" fill="#1c1"/>
    <path d="M149 327v14" stroke="#22e"/><path d="M147 340h4l-2 4z" fill="#22e"/>
    <text x="160" y="326" font-size="5" fill="#e22">x</text>
    <text x="165" y="332" font-size="5" fill="#1c1">Y</text>
    <text x="147" y="351" font-size="5" fill="#22e">Z</text>`);

document.getElementById('model').innerHTML = out.join('');
```
